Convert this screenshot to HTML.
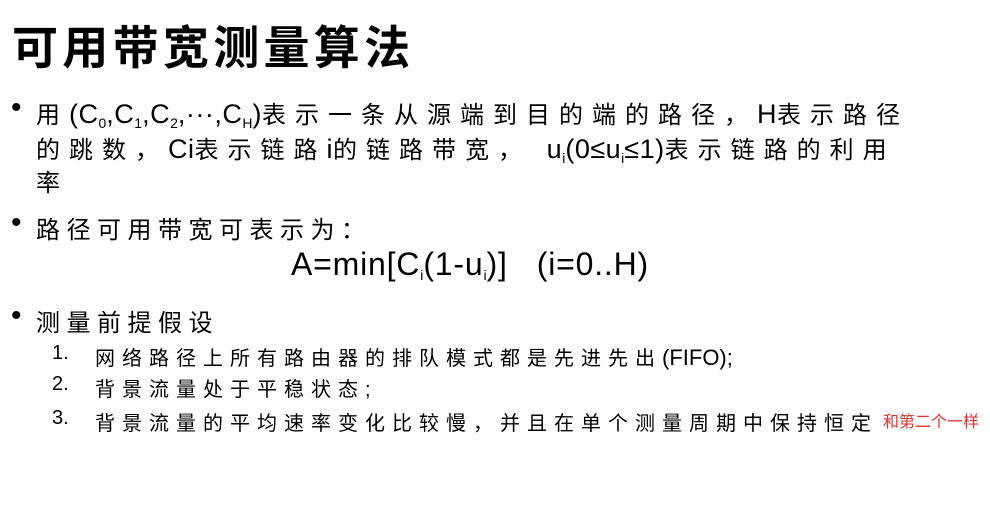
<!DOCTYPE html>
<html><head><meta charset="utf-8"><style>
body{margin:0;width:990px;height:512px;background:#fff;position:relative;overflow:hidden;font-family:"Liberation Sans","Noto Sans CJK SC",sans-serif;color:#000}
div{position:absolute;white-space:nowrap}
.t{left:12px;top:12px;font-size:46px;font-weight:bold;letter-spacing:4.3px}
.l{font-size:24px;letter-spacing:6.5px;left:36px}
.b{font-size:30px;left:11px;line-height:30px}
.s{font-size:20px;letter-spacing:7px}
.e{letter-spacing:0}
.l .e{font-size:27px;letter-spacing:0.5px}
sub{font-size:14px;letter-spacing:0;vertical-align:-5px}
.n{left:52px;font-size:20px}
</style></head><body>
<div class="t">可用带宽测量算法</div>
<div class="b" style="top:93px">•</div>
<div class="l" style="top:95px;letter-spacing:9px">用<span class="e">(C<sub>0</sub>,C<sub>1</sub>,C<sub>2</sub>,···,C<sub>H</sub>)</span>表示一条从源端到目的端的路径，<span class="e">H</span>表示路径</div>
<div class="l" style="top:130px;letter-spacing:9px">的跳数，<span class="e">Ci</span>表示链路<span class="e">i</span>的链路带宽，&nbsp;<span class="e">u<sub>i</sub>(0≤u<sub>i</sub>≤1)</span>表示链路的利用</div>
<div class="l" style="top:163px">率</div>
<div class="b" style="top:208px">•</div>
<div class="l" style="top:210px">路径可用带宽可表示为：</div>
<div style="left:291px;top:246px;font-size:32px;letter-spacing:0.8px">A=min[C<sub>i</sub>(1-u<sub>i</sub>)]&nbsp;&nbsp;&nbsp;(i=0..H)</div>
<div class="b" style="top:301px">•</div>
<div class="l" style="top:303px">测量前提假设</div>
<div class="n" style="top:342px">1.</div>
<div class="s" style="left:95px;top:342px">网络路径上所有路由器的排队模式都是先进先出<span class="e" style="font-size:22px">(FIFO);</span></div>
<div class="n" style="top:373px">2.</div>
<div class="s" style="left:95px;top:373px">背景流量处于平稳状态;</div>
<div class="n" style="top:407px">3.</div>
<div class="s" style="left:95px;top:407px">背景流量的平均速率变化比较慢，并且在单个测量周期中保持恒定</div>
<div style="left:883px;top:408px;font-size:16px;color:#e03030">和第二个一样</div>
</body></html>
